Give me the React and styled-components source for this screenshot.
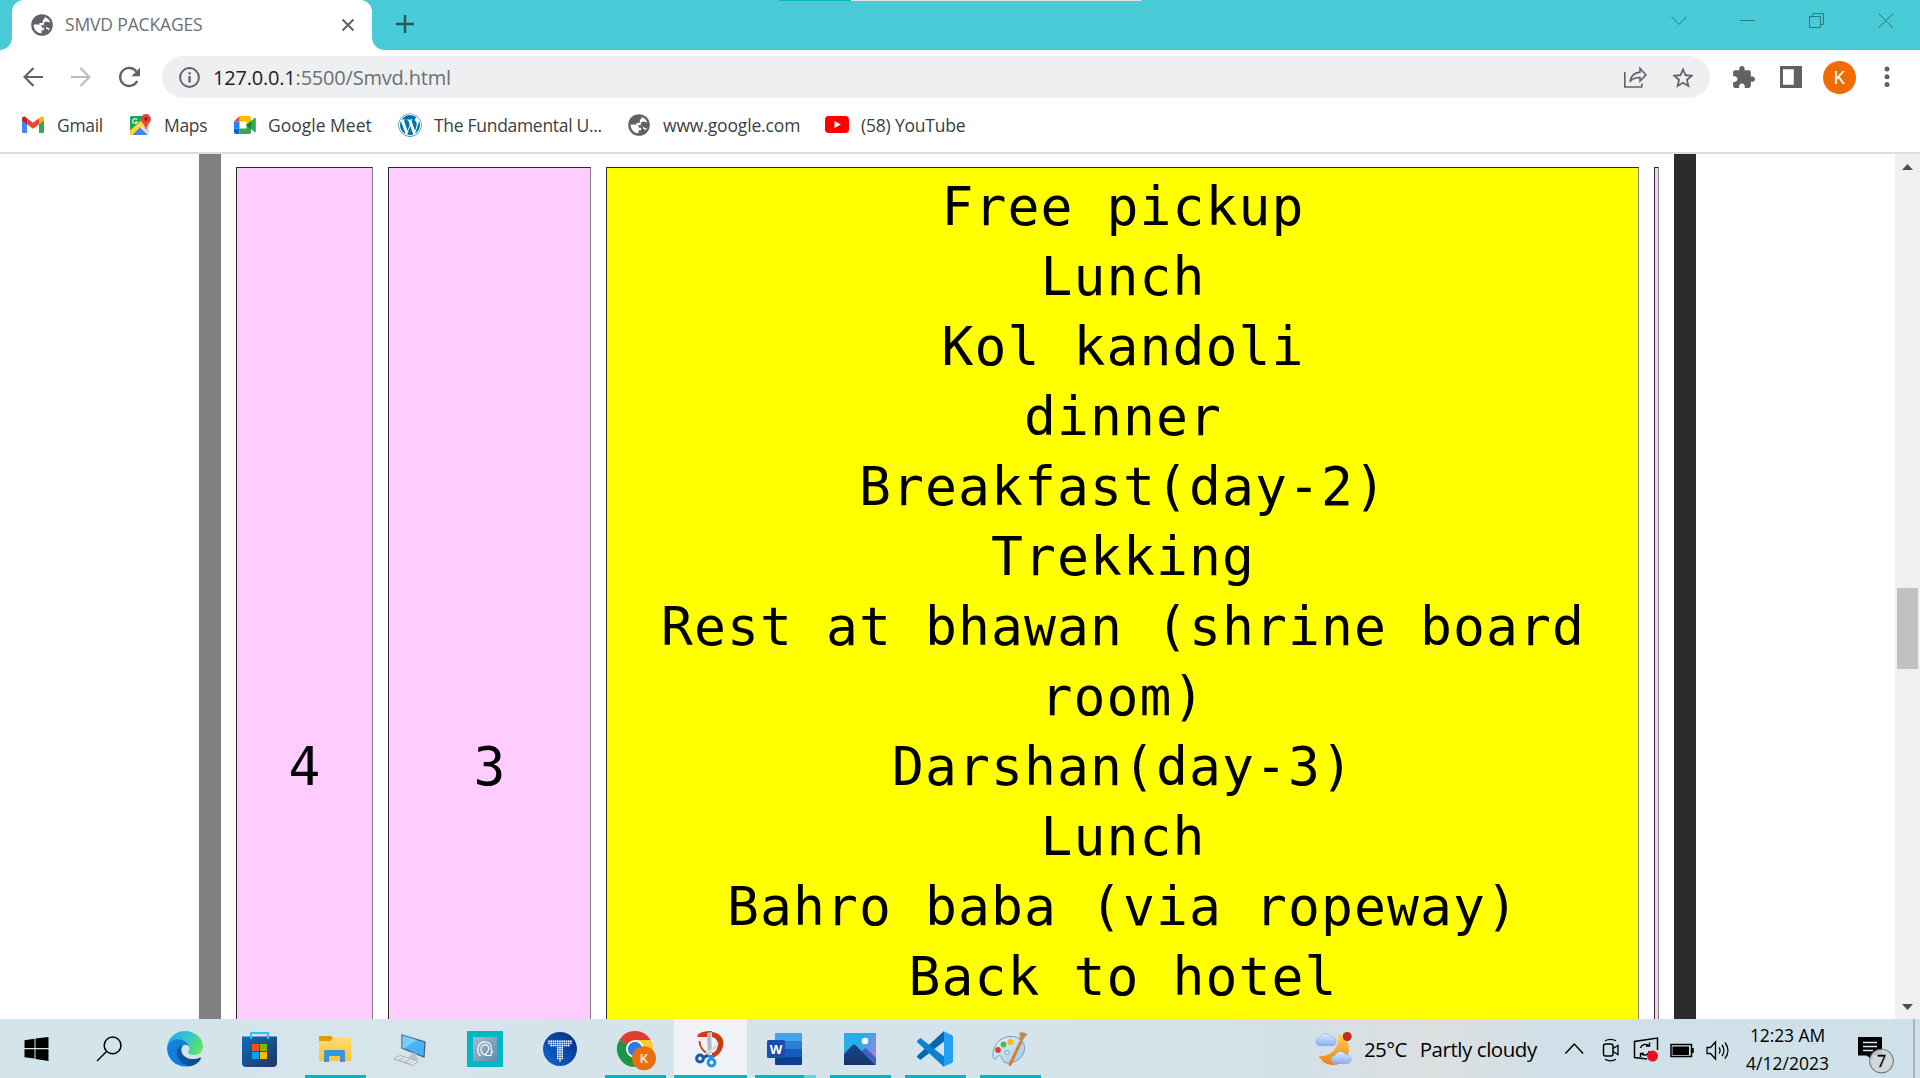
import React from "react";
import styled, { createGlobalStyle, css } from "styled-components";
import { MdExtension, MdStarBorder } from "react-icons/md";
import { FaWordpress } from "react-icons/fa";

const GlobalStyle = createGlobalStyle`
  * { box-sizing: border-box; }
  html, body { margin: 0; padding: 0; overflow: hidden; background: #fff; }
  svg { display: block; flex: none; overflow: visible; }
`;

const Screen = styled.div`
  width: 1920px;
  height: 1078px;
  display: flex;
  flex-direction: column;
  overflow: hidden;
  background: #fff;
  font-family: "Open Sans", "Noto Sans", sans-serif;
`;

/* ---------- browser chrome ---------- */

const TabStrip = styled.header`
  position: relative;
  flex: none;
  height: 50px;
  display: flex;
  padding-left: 12px;
  background: #48cbd6;
`;

const Progress = styled.div`
  position: absolute;
  top: 0;
  left: 779px;
  width: 362px;
  height: 1px;
  background: linear-gradient(to right, #00b7c3 72px, #e1e1e1 72px);
`;

const Tab = styled.div`
  position: relative;
  width: 360px;
  height: 50px;
  display: flex;
  align-items: center;
  padding: 0 18px 0 19px;
  background: #fff;
  border-radius: 12px 12px 0 0;

  &::before, &::after {
    content: "";
    position: absolute;
    bottom: 0;
    width: 12px;
    height: 12px;
  }
  &::before {
    left: -12px;
    background: radial-gradient(circle at 0 0, transparent 11.5px, #fff 12px);
  }
  &::after {
    right: -12px;
    background: radial-gradient(circle at 100% 0, transparent 11.5px, #fff 12px);
  }
`;

const Label = styled.span`
  font-size: ${(p) => p.$size || 17.5}px;
  letter-spacing: ${(p) => p.$track || 0}px;
  color: ${(p) => p.$color || "#3c4043"};
  margin-left: ${(p) => p.$indent || 0}px;
  line-height: 24px;
  white-space: pre;
`;

const TabTitle = styled(Label)`
  flex: 1;
  margin: 0 0 2px 12px;
`;

const NewTab = styled.div`
  padding: 15px 0 0 24px;
`;

const WindowButtons = styled.div`
  margin-left: auto;
  display: flex;
  gap: 53px;
  padding: 13px 26px 0 0;
`;

const Toolbar = styled.div`
  flex: none;
  height: 54px;
  display: flex;
  align-items: center;
  padding: 0 0 0 23px;
`;

const NavButtons = styled.div`
  width: 139px;
  display: flex;
  gap: 28px;
`;

const Omnibox = styled.div`
  width: 1548px;
  height: 42px;
  display: flex;
  align-items: center;
  padding: 1px 14px 0 17px;
  border-radius: 21px;
  background: #eeeff1;
`;

const Url = styled(Label)`
  flex: 1;
  margin-left: 13px;
  b { font-weight: 400; color: #202124; }
`;

const OmniActions = styled.div`
  display: flex;
  align-items: center;
  gap: 23px;
`;

const ToolbarActions = styled.div`
  display: flex;
  align-items: center;
  padding-left: 21px;
`;

const PanelButton = styled.div`
  margin-left: 24px;
`;

const Avatar = styled.div`
  width: 33px;
  height: 33px;
  margin: 0 28px 0 21px;
  border-radius: 50%;
  background: #ef6c00;
  color: #fff;
  display: grid;
  place-items: center;
  font: 18px Roboto, sans-serif;
`;

const Bookmarks = styled.nav`
  flex: none;
  height: 50px;
  display: flex;
  align-items: flex-start;
  padding: 8px 0 0 22px;
  border-bottom: 2px solid #dcdcdc;
`;

const Bookmark = styled.div`
  width: ${(p) => p.$width}px;
  height: 25px;
  display: flex;
  align-items: center;
  gap: ${(p) => p.$gap || 12}px;
`;

/* ---------- page ---------- */

const Viewport = styled.main`
  flex: 1;
  min-height: 0;
  display: flex;
  overflow: hidden;
`;

const Page = styled.div`
  flex: 1;
  display: flex;
  padding-left: 199px;
`;

const Table = styled.div`
  display: flex;
  align-items: flex-start;
  gap: 15px;
  width: 1497px;
  height: 1300px;
  padding: 13px 15px 0;
  border-left: 22px solid #808080;
  border-right: 22px solid #2c2c2c;
`;

const Cell = styled.div`
  flex: none;
  width: ${(p) => p.$width}px;
  height: 1200px;
  display: flex;
  flex-direction: column;
  justify-content: center;
  align-items: center;
  padding: 4px 0 4px ${(p) => (p.$width > 10 ? 1 : 0)}px;
  background: #ffccff;
  border: 1px solid;
  border-color: #2c2c2c #808080 #808080 #2c2c2c;
  font: 53px/70px "DejaVu Sans Mono", monospace;
  letter-spacing: 1.09px;
  color: #000;
  ${(p) => p.$plan && css`
    justify-content: flex-start;
    background: #ffff00;
  `}
`;

const Line = styled.div`
  white-space: pre;
`;

const Scrollbar = styled.div`
  width: 25px;
  height: 100%;
  display: flex;
  flex-direction: column;
  align-items: center;
  padding: 10px 0 9px;
  background: #f0f0f0;
`;

const Thumb = styled.div`
  width: 21px;
  height: 81px;
  margin: 418px 0 auto;
  background: #c1c1c1;
`;

/* ---------- taskbar ---------- */

const Taskbar = styled.footer`
  flex: none;
  height: 59px;
  display: flex;
  background: linear-gradient(to right, #d3e4ea 0, #d6e4ec 300px, #d4e4ea 1050px, #d3e0e8 1290px, #dcdfe0 1430px, #cfe0e9 1560px, #cfe1e8 1920px);
`;

const Slot = styled.div`
  width: ${(p) => p.$width || 75}px;
  height: 59px;
  display: flex;
  flex-direction: column;
  align-items: center;
  padding-top: 12px;
  svg { margin-right: 1px; }
`;

const SlotFill = styled(Slot)`
  width: 73px;
  margin: 0 1px;
  background: #eff3f7;
`;

const Running = styled.div`
  width: ${(p) => p.$width || 61}px;
  height: 3px;
  margin-top: 8px;
  background: ${(p) => (p.$stacked ? "linear-gradient(to right, #00b7c3 49px, #62d2d9 49px)" : "#00b7c3")};
`;

const Tray = styled.div`
  margin-left: auto;
  width: 604px;
  display: flex;
  align-items: center;
`;

const Weather = styled.div`
  width: 249px;
  display: flex;
  align-items: center;
`;

const TrayIcons = styled.div`
  width: 165px;
  display: flex;
  align-items: center;
`;

const Clock = styled.div`
  width: 115px;
  display: flex;
  flex-direction: column;
  align-items: center;
  gap: 4px;
`;

const Notice = styled.div`
  padding: 13px 0 0 13px;
`;

const ShowDesktop = styled.div`
  width: 7px;
  height: 59px;
  margin-left: auto;
  border-left: 2px solid #a9b6bd;
`;

const lines = [
  "Free pickup", "Lunch", "Kol kandoli", "dinner", "Breakfast(day-2)", "Trekking",
  "Rest at bhawan (shrine board", "room)", "Darshan(day-3)", "Lunch",
  "Bahro baba (via ropeway)", "Back to hotel",
];

const g = "#5f6368";

const GlobeIcon = () => (
  <svg width="22" height="22" viewBox="0 0 22 22">
    <circle cx="11" cy="11" r="10.800" fill={g} />
    <path d="M2.700 10.500h4.600c2.200 0 3.700 1.300 3.700 3.300h2v2.400h-2.400v3.100c-4.600 0-8-3.800-7.900-8.800z" fill="#fff" />
    <path d="M13.600 3.100c3.600 1.100 5.900 4.200 5.900 8 0 2.200-.8 4.100-2 5.500-.4-.9-.9-1.500-2.300-1.500v-2.500c0-.8-.5-1.300-1.400-1.300H8.500V8.900h2.300c.7 0 1.100-.4 1.100-1.100V5.500h.6c.7 0 1.100-.6 1.100-2.400z" fill="#fff" />
    <path d="M15.500 7.500l4.600 1.300.4 4.500-3.200 1.200-2.300-2.200-2.500-1.500.8-2.500z" fill={g} />
  </svg>
);

const BackIcon = ({ color = g, flip }) => (
  <svg width="20" height="20" viewBox="0 0 20 20" fill="none" stroke={color} strokeWidth="2.2" transform={flip ? "scale(-1 1)" : undefined}>
    <path d="M20 10H1.8M10.5 1L1.6 10l8.9 9" />
  </svg>
);

const ReloadIcon = () => (
  <svg width="21" height="21" viewBox="0 0 21 21">
    <path d="M17.3 4.5A9 9 0 1 0 18.2 14" fill="none" stroke={g} strokeWidth="2.3" />
    <path d="M21 .8v8.4h-8.6z" fill={g} />
  </svg>
);

const InfoIcon = () => (
  <svg width="21" height="21" viewBox="0 0 21 21">
    <circle cx="10.5" cy="10.5" r="9.4" fill="none" stroke={g} strokeWidth="2" />
    <path d="M9.4 5.2h2.3v2.2H9.4zM9.4 9h2.3v6.6H9.4z" fill={g} />
  </svg>
);

const ShareIcon = () => (
  <svg width="23" height="21" viewBox="0 0 23 21" fill="none" stroke={g} strokeWidth="1.6">
    <path d="M.8 5v15h17v-3.6" />
    <path d="M16 1.4L22 7.9 16 14v-3.5c-5 0-8.2 1.400-10 4.200.6-5.300 4.400-9 10-9.600z" />
  </svg>
);

const PanelIcon = () => (
  <svg width="22" height="22" viewBox="0 0 22 22">
    <path d="M0 0h22v22H0zM3 3.2v15.6h10.8V3.2z" fill={g} fillRule="evenodd" />
  </svg>
);

const DotsIcon = () => (
  <svg width="6" height="22" viewBox="0 0 6 22" fill={g}>
    <circle cx="3" cy="3" r="2.5" /><circle cx="3" cy="10.7" r="2.5" /><circle cx="3" cy="18.4" r="2.5" />
  </svg>
);

const GmailIcon = () => (
  <svg width="22" height="17" viewBox="0 0 22 17">
    <path d="M0 3v12.5A1.5 1.5 0 0 0 1.5 17H5V6.500z" fill="#4285f4" />
    <path d="M22 3v12.5a1.500 1.500 0 0 1-1.500 1.500H17V6.500z" fill="#34a853" />
    <path d="M5 8.200V2.200L11 6.800l6-4.600v6L11 12.700z" fill="#ea4335" />
    <path d="M0 2.800v1.700L5 8.200V2.200L3.500 1C2 0 0 .9 0 2.800z" fill="#c5221f" />
    <path d="M22 2.800v1.700l-5 3.700V2.200L18.500 1C20 0 22 .9 22 2.800z" fill="#fbbc04" />
  </svg>
);

const MapsIcon = () => (
  <svg width="23" height="22" viewBox="0 0 23 22">
    <rect x="1" y="2" width="19" height="19" rx="1.800" fill="#e8eaed" />
    <path d="M2.500 2H15l3 6L1 21V3.500A1.500 1.500 0 0 1 2.500 2z" fill="#23a455" />
    <path d="M1 16.500L15 4l4 4L4 21H1z" fill="#fdd835" />
    <path d="M3.500 21l7.500-7.500 8 7.500z" fill="#4285f4" />
    <path d="M12.800 12.500l7.200 7V9l-3-1z" fill="#cfd2d6" />
    <path d="M8 5.700A2.400 2.400 0 1 0 8.300 8H6" fill="none" stroke="#fff" strokeWidth="1.100" />
    <path d="M16.900 0a5 5 0 0 0-5 5c0 3.700 4 4.800 4.700 10.200h.7C18 9.800 22 8.700 22 5a5 5 0 0 0-5.100-5z" fill="#e84435" />
    <circle cx="17" cy="5" r="1.800" fill="#8a1a13" />
  </svg>
);

const MeetIcon = () => (
  <svg width="22" height="18" viewBox="0 0 22 18">
    <path d="M0 5.500L5.500 0v5.500z" fill="#ea4335" />
    <path d="M5.500 0h9.800A1.700 1.700 0 0 1 17 1.700V7l-4.500 3V5.500h-7z" fill="#fbbc04" />
    <path d="M0 5.500h5.500v7H0z" fill="#2684fc" />
    <path d="M0 12.500h5.500V18H1.700A1.700 1.700 0 0 1 0 16.300z" fill="#0066da" />
    <path d="M5.500 12.500h7V8L17 11v5.300a1.700 1.700 0 0 1-1.700 1.700H5.500z" fill="#34a853" />
    <path d="M12.500 9l8-7c.6-.5 1.300-.2 1.300.5v13c0 .7-.7 1-1.300.5z" fill="#34a853" />
    <path d="M12.500 9L17 5v8z" fill="#188038" />
  </svg>
);

const YoutubeIcon = () => (
  <svg width="24" height="17" viewBox="0 0 24 17">
    <rect width="24" height="17" rx="3.800" fill="#f00" />
    <path d="M9.500 5v7l6.300-3.500z" fill="#fff" />
  </svg>
);

const StartIcon = () => (
  <svg width="36" height="36" viewBox="0 0 36 36">
    <path d="M6.500 9.300l10-1.500V17h-10zM17.500 7.600l13-1.600v11h-13zM6.500 18.200h10v9.400l-10-1.300zM17.500 18.200h13V30l-13-1.900z" />
  </svg>
);

const SearchIcon = () => (
  <svg width="36" height="36" viewBox="0 0 36 36" fill="none" stroke="#000" strokeWidth="1.500">
    <circle cx="20.600" cy="14.400" r="8.400" /><path d="M14.500 20.500L5 30" />
  </svg>
);

const EdgeIcon = () => (
  <svg width="36" height="36" viewBox="0 0 36 36">
    <defs>
      <linearGradient id="edgeTop" x1="0" y1=".3" x2="1" y2=".6"><stop stopColor="#25a9ea" /><stop offset=".5" stopColor="#2fc7cf" /><stop offset="1" stopColor="#62e45a" /></linearGradient>
      <linearGradient id="edgeLeft" x1="0" y1="0" x2=".5" y2="1"><stop stopColor="#1386d8" /><stop offset="1" stopColor="#0a7be0" /></linearGradient>
      <linearGradient id="edgeLow" x1="0" y1="0" x2="1" y2="1"><stop stopColor="#0f5cb1" /><stop offset="1" stopColor="#114a8b" /></linearGradient>
    </defs>
    <path d="M0 16C1.500 6 9 0 18 0c10 0 18 7 18 15.500 0 5-3.800 8.500-8.700 8.500-4.300 0-6.300-1.500-6.300-2.600 0-1 1.300-1.400 1.300-4 0-5-4.600-8.600-10.300-8.600C6 8.800 1.500 12 0 16z" fill="url(#edgeTop)" />
    <path d="M0 17c.5-5.500 5.500-8.700 11-8.700 6 0 10.500 3.500 11.200 7.500-2-2.200-4.500-2.400-6-1.400-7 4.600-2.200 17.600 9.800 20C12 39 0 29.500 0 17z" fill="url(#edgeLeft)" />
    <path d="M16.200 14c-7.400 1-8.200 9-4.400 14 4.200 6 10 7.600 13.600 6.700 4-1.200 7-4 8.500-7 .4-.9-.3-1.400-1.200-1-7.200 3.300-18 .8-18.300-7.700 0-2 .8-3.800 1.800-5z" fill="url(#edgeLow)" />
  </svg>
);

const StoreIcon = () => (
  <svg width="36" height="36" viewBox="0 0 36 36">
    <defs><linearGradient id="store" x1="0" y1="0" x2="1" y2="1"><stop stopColor="#0d6cbe" /><stop offset="1" stopColor="#22355f" /></linearGradient></defs>
    <path d="M0 5.500h35V32a4 4 0 0 1-4 4H4a4 4 0 0 1-4-4z" fill="url(#store)" />
    <path d="M9 8V2h17v6" fill="none" stroke="#31c4f3" strokeWidth="2" />
    <path d="M10 13h7v7h-7z" fill="#f25022" /><path d="M18 13h7v7h-7z" fill="#7fba00" />
    <path d="M10 21h7v7h-7z" fill="#00a4ef" /><path d="M18 21h7v7h-7z" fill="#ffb900" />
  </svg>
);

const FolderIcon = () => (
  <svg width="36" height="36" viewBox="0 0 36 36">
    <defs><linearGradient id="folder" x1="0" y1="0" x2="0" y2="1"><stop stopColor="#ffdb6b" /><stop offset="1" stopColor="#f9c440" /></linearGradient></defs>
    <path d="M2 6a1 1 0 0 1 1-1h11l2 2v4H2z" fill="#dd9c07" />
    <path d="M2 10h11l3-3h17a1 1 0 0 1 1 1v22H3a1 1 0 0 1-1-1z" fill="url(#folder)" />
    <path d="M7 31V20.500a1.500 1.500 0 0 1 1.500-1.500h18a1.500 1.500 0 0 1 1.500 1.500V31h-5v-6H12v6z" fill="#3a94dc" />
  </svg>
);

const PcIcon = () => (
  <svg width="36" height="36" viewBox="0 0 36 36">
    <path d="M10 4l23 7-1 15-22-9z" fill="#49b3fa" stroke="#4b6478" strokeWidth="1.300" />
    <path d="M10.500 4.500L25 9 12 17.600l-1.500-.7z" fill="#7fcbfc" />
    <path d="M19 21l6 2-1 3 4 2.500-5 .5-8-3 4-1z" fill="#b9c4cc" />
    <path d="M2 28l6-3.500 18 6-5 4z" fill="#f3f6f8" stroke="#9aa5ad" strokeWidth=".9" />
    <path d="M5 28l15 5M7 26.500l16 5.500M7 30l5-4M13 32l5-4" stroke="#a4aeb5" strokeWidth=".7" />
  </svg>
);

const HeadIcon = () => (
  <svg width="36" height="36" viewBox="0 0 36 36">
    <defs><linearGradient id="head" x1="0" y1="0" x2="1" y2="1"><stop stopColor="#a5bdd2" /><stop offset="1" stopColor="#6289ae" /></linearGradient></defs>
    <path d="M0 0h36v36H0z" fill="#00b7c3" /><path d="M6 6h24v24H6z" fill="url(#head)" />
    <g fill="none" stroke="#fff" strokeWidth="1.100">
      <path d="M13.500 25c-2.500-2-3-5-2.500-8 1-5 4.500-6.500 8-6 4 .5 5.500 4 5.200 7.500l1.300 3-1.500.5v2.500h-5v-2" />
      <path d="M15.500 22.500c-2-2-2.500-7 1-8.500 4-1.500 6 2 5 5-.8 2-2.500 2.500-2.500 4-1 .8-2.500.5-3.500-.5z" />
    </g>
  </svg>
);

const dots = [];
for (let y = 0; y < 10; y++) {
  for (let x = 0; x < 11; x++) {
    if (y < 3 ? !(y === 2 && (x < 1 || x > 9)) : x > 3 && x < 7 && !(y === 9 && x !== 5)) dots.push([x, y]);
  }
}
const DottedIcon = () => (
  <svg width="36" height="36" viewBox="0 0 36 36">
    <defs><linearGradient id="tee" x1="1" y1="0" x2="0" y2="1"><stop stopColor="#062c7b" /><stop offset="1" stopColor="#1268d6" /></linearGradient></defs>
    <circle cx="18" cy="18" r="17" fill="url(#tee)" />
    {dots.map(([x, y]) => <circle key={x + "-" + y} cx={7 + x * 2.2} cy={10.2 + y * 2.15} r=".95" fill="#f4f8ff" />)}
  </svg>
);

const ChromeIcon = () => (
  <svg width="36" height="36" viewBox="0 0 36 36">
    <path d="M18 18L2.400 9A18 18 0 0 1 33.600 9z" fill="#e33b2e" />
    <path d="M18 9h15.600A18 18 0 0 1 18 36l8-13z" fill="#fcc934" />
    <path d="M2.400 9A18 18 0 0 0 18 36l7.800-13.500L18 18z" fill="#1e9545" />
    <circle cx="18" cy="18" r="9" fill="#fff" /><circle cx="18" cy="18" r="7.200" fill="#2b7de9" />
    <circle cx="27" cy="27.200" r="12" fill="#e86f10" />
    <text x="27" y="32" textAnchor="middle" fontFamily="Roboto, sans-serif" fontSize="13" fontWeight="700" fill="#f7d9bd">K</text>
  </svg>
);

const SnipIcon = () => (
  <svg width="36" height="36" viewBox="0 0 36 36">
    <path d="M5 5c2-4 8-5 15-5l-2 6H6z" fill="#d13a12" />
    <path d="M20 1c10 1 14 10 10 17-2 5-6 8-10 9v-5c4-1 5-4 6-8 0-4-2-7-6-8z" fill="#ce3a11" />
    <path d="M7.500 10c0 6 4 11 9 13" fill="none" stroke="#ce3a11" strokeWidth="1.800" />
    <path d="M15 2l4-1 1 20-4 4z" fill="#b4b7bb" /><path d="M27 12l-2 4-10 9-2-3z" fill="#d8dadd" />
    <circle cx="8" cy="27.500" r="3.400" fill="none" stroke="#115fab" strokeWidth="3" /><path d="M10 25l6-2 1 3-6 2z" fill="#115fab" />
    <circle cx="19.500" cy="31.500" r="3.400" fill="none" stroke="#2394e2" strokeWidth="3" /><path d="M17 24h4v5h-4z" fill="#2394e2" />
  </svg>
);

const WordIcon = () => (
  <svg width="36" height="36" viewBox="0 0 36 36">
    <path d="M9 2h25a1 1 0 0 1 1 1v7H8V3a1 1 0 0 1 1-1z" fill="#41a5ee" /><path d="M8 10h27v8H8z" fill="#2b7cd3" />
    <path d="M8 18h27v8H8z" fill="#185abd" /><path d="M8 26h27v7a1 1 0 0 1-1 1H9a1 1 0 0 1-1-1z" fill="#103f91" />
    <rect y="9" width="18" height="18" rx="1.500" fill="#184fae" />
    <text x="9" y="22.500" textAnchor="middle" fontFamily="Open Sans, sans-serif" fontSize="13" fontWeight="700" fill="#fff">W</text>
  </svg>
);

const PhotosIcon = () => (
  <svg width="36" height="36" viewBox="0 0 36 36">
    <defs>
      <linearGradient id="sky" x1="0" y1="0" x2="1" y2=".6"><stop offset=".5" stopColor="#27ade9" /><stop offset="1" stopColor="#9d84d9" /></linearGradient>
      <linearGradient id="hill" x1="0" y1="0" x2="0" y2="1"><stop stopColor="#164a92" /><stop offset="1" stopColor="#173467" /></linearGradient>
    </defs>
    <path d="M2 2h32v32H2z" fill="url(#sky)" /><path d="M18 22l4-4q1.500-1.500 3 0l9 9v7H18z" fill="#3e62bd" />
    <path d="M2 23l8.500-9q1.500-1 3 0L33 34H2z" fill="url(#hill)" /><circle cx="23" cy="10" r="3.300" fill="#fff" />
  </svg>
);

const CodeIcon = () => (
  <svg width="36" height="36" viewBox="0 0 36 36">
    <path d="M27 0L.5 24.500c-.6.6-.6 1.400 0 2l2 1.800c.5.500 1.300.5 1.900 0L27 10.500z" fill="#0069b0" />
    <path d="M27 36L.5 11.500c-.6-.6-.6-1.400 0-2l2-1.800c.5-.5 1.300-.5 1.900 0L27 25.500z" fill="#0a82cf" />
    <path d="M26 0l8.800 4a2 2 0 0 1 1.200 1.800v24.400a2 2 0 0 1-1.200 1.800L26 36l1-1.500v-33z" fill="#23a0f2" />
  </svg>
);

const PaintIcon = () => (
  <svg width="36" height="36" viewBox="0 0 36 36">
    <defs><linearGradient id="palette" x1="0" y1="0" x2="1" y2="1"><stop stopColor="#e8f5fc" /><stop offset="1" stopColor="#9fc8e4" /></linearGradient></defs>
    <path d="M1 25C0 15 8 6 18 5.500c9-.3 15 5 14.500 12.500C32 26 24 32 16 32c-5 0-5-2-6-5-1-2.500-3-3-4.500-1.500C4.500 27 4.500 28 3 28c-1.300 0-2-1.500-2-3z" fill="url(#palette)" stroke="#5f97be" strokeWidth=".9" />
    <circle cx="6" cy="19" r="2.900" fill="#e63b31" /><circle cx="11.500" cy="13.500" r="2.900" fill="#57b947" /><circle cx="18.500" cy="11" r="3.100" fill="#fbb61c" />
    <circle cx="15" cy="21.500" r="2.100" fill="#d6e5ee" stroke="#6c9dbe" strokeWidth=".8" />
    <path d="M28 10l2 1-11 23-2 1 .5-3z" fill="#e5801f" stroke="#b25d12" strokeWidth=".5" />
    <path d="M27 2c2-1.500 6-1 8.500 1.500-3 1.500-3 4.500-5.500 7l-3-1.500c1-3 1.500-5 0-7z" fill="#b98a5d" />
  </svg>
);

const cloud = "M4 13a4 4 0 0 1 0-8C5 1 12-1 14.500 4c4 0 6 2.500 5.500 5.500-.5 2.500-2 3.500-4 3.500z";
const WeatherIcon = () => (
  <svg width="36" height="34" viewBox="0 0 36 34">
    <defs>
      <linearGradient id="moon" x1="0" y1="0" x2="0" y2="1"><stop stopColor="#ffd34f" /><stop offset="1" stopColor="#f08216" /></linearGradient>
      <linearGradient id="cloud" x1="0" y1="0" x2="0" y2="1"><stop stopColor="#e2edff" /><stop offset="1" stopColor="#88aef0" /></linearGradient>
    </defs>
    <path d="M22 2c7 2 11 8 11 15 0 9-7 16-16 16-7 0-12-4-14-9 11 1 21-7 19-22z" fill="url(#moon)" />
    <path d={cloud} fill="url(#cloud)" stroke="#7ea6e8" strokeWidth=".6" transform="translate(0 .7)" />
    <path d={cloud} fill="url(#cloud)" stroke="#7ea6e8" strokeWidth=".6" transform="translate(15 18.500)" />
    <circle cx="31.200" cy="4.500" r="4.500" fill="#c42b1c" />
  </svg>
);

const TrayGlyphs = () => (
  <svg width="165" height="30" viewBox="0 0 165 30" fill="none" stroke="#000" strokeWidth="1.500">
    <path d="M.5 19.500l8.800-9.500 8.800 9.500" />
    <rect x="38.500" y="10" width="9.500" height="12" rx="2" /><path d="M48 14.500l5-3v9l-5-3M40 6.800q5.500-3 11 0M40 25.300q5.500 3 11 0" strokeWidth="1.300" />
    <path d="M82 25l-12.500-1.500V7.500L92.500 4v12" />
    <path d="M75.500 14a5 5 0 0 1 8.500-2M84.500 8.500V12H81M84.500 17a5 5 0 0 1-8.500 2.500M75.500 23v-3.500H79" strokeWidth="1.400" />
    <circle cx="87.500" cy="22" r="5.500" fill="#e81123" stroke="none" />
    <path d="M106 10.500h20.500v12H106zM128 14v5" /><path d="M107.500 12.500H124v8.500h-16.500z" fill="#000" stroke="none" />
    <path d="M142 13.500h3.500l5-5.500v17l-5-5.500H142zM154 13.500q2.200 3 0 6M157 11q4 5.500 0 11M160 8.500q6 8 0 16" strokeWidth="1.300" />
  </svg>
);

const NoticeIcon = () => (
  <svg width="37" height="37" viewBox="0 0 37 37">
    <path d="M0 0h24v18.500H15v4.500L8.500 18.500H0z" />
    <path d="M5 5.500h14M5 9.500h14M5 13.500h10" stroke="#dce8ee" strokeWidth="1.300" />
    <circle cx="23.500" cy="24" r="11.800" fill="#d3d6d9" fillOpacity=".92" stroke="#6f777c" strokeWidth="1.100" />
    <text x="23.500" y="29.800" textAnchor="middle" fontFamily="Open Sans, sans-serif" fontSize="16" fill="#000" stroke="#000" strokeWidth=".3">7</text>
  </svg>
);

export default function App() {
  return (
    <Screen>
      <GlobalStyle />
      <TabStrip>
        <Progress />
        <Tab>
          <GlobeIcon />
          <TabTitle $track={-0.15} $color="#6b6f73">SMVD PACKAGES</TabTitle>
          <svg width="12" height="12" viewBox="0 0 12 12" stroke={g} strokeWidth="2"><path d="M.5.5l11 11M11.500.5l-11 11" /></svg>
        </Tab>
        <NewTab>
          <svg width="18" height="18" viewBox="0 0 18 18" stroke="#2b5559" strokeWidth="2.400"><path d="M9 0v18M0 9h18" /></svg>
        </NewTab>
        <WindowButtons>
          <svg width="16" height="16" viewBox="0 0 16 16" fill="none" stroke="#31777d"><path d="M.5 3.500L8 11.500l7.500-8" /></svg>
          <svg width="16" height="16" viewBox="0 0 16 16" fill="none" stroke="#31777d"><path d="M0 7.500h15" /></svg>
          <svg width="16" height="16" viewBox="0 0 16 16" fill="none" stroke="#31777d"><path d="M.5 3.500h11v11H.5zM3.500 3.500v-3h11v11h-3" /></svg>
          <svg width="16" height="16" viewBox="0 0 16 16" fill="none" stroke="#31777d"><path d="M.5.5l14.500 14.500M15 .5L.5 15" /></svg>
        </WindowButtons>
      </TabStrip>

      <Toolbar>
        <NavButtons><BackIcon /><BackIcon flip color="#babcbe" /><ReloadIcon /></NavButtons>
        <Omnibox>
          <InfoIcon />
          <Url $size={20} $track={-0.2} $color="#6b6f73"><b>127.0.0.1</b>:5500/Smvd.html</Url>
          <OmniActions><ShareIcon /><MdStarBorder size={26} color={g} /></OmniActions>
        </Omnibox>
        <ToolbarActions>
          <MdExtension size={25} color={g} />
          <PanelButton><PanelIcon /></PanelButton>
          <Avatar>K</Avatar>
          <DotsIcon />
        </ToolbarActions>
      </Toolbar>

      <Bookmarks>
        <Bookmark $width={107} $gap={13}><GmailIcon /><Label $track={-0.3}>Gmail</Label></Bookmark>
        <Bookmark $width={105}><MapsIcon /><Label $track={-0.3}>Maps</Label></Bookmark>
        <Bookmark $width={164}><MeetIcon /><Label $track={0}>Google Meet</Label></Bookmark>
        <Bookmark $width={230}><FaWordpress size={24} color="#0073aa" /><Label $track={-0.3}>The Fundamental U...</Label></Bookmark>
        <Bookmark $width={197} $gap={13}><GlobeIcon /><Label $track={-0.15}>www.google.com</Label></Bookmark>
        <Bookmark $width={200}><YoutubeIcon /><Label $track={-0.2}>(58) YouTube</Label></Bookmark>
      </Bookmarks>

      <Viewport>
        <Page>
          <Table>
            <Cell $width={137}><Line>4</Line></Cell>
            <Cell $width={203}><Line>3</Line></Cell>
            <Cell $width={1033} $plan>{lines.map((t, i) => <Line key={i}>{t}</Line>)}</Cell>
            <Cell $width={5} />
          </Table>
        </Page>
        <Scrollbar>
          <svg width="11" height="6" viewBox="0 0 11 6"><path d="M0 6l5.500-6L11 6z" fill="#505050" /></svg>
          <Thumb />
          <svg width="11" height="6" viewBox="0 0 11 6"><path d="M0 0l5.500 6L11 0z" fill="#505050" /></svg>
        </Scrollbar>
      </Viewport>

      <Taskbar>
        <Slot $width={72}><StartIcon /></Slot>
        <Slot $width={76}><SearchIcon /></Slot>
        <Slot><EdgeIcon /></Slot>
        <Slot><StoreIcon /></Slot>
        <Slot><FolderIcon /><Running /></Slot>
        <Slot><PcIcon /></Slot>
        <Slot><HeadIcon /></Slot>
        <Slot><DottedIcon /></Slot>
        <Slot><ChromeIcon /><Running /></Slot>
        <SlotFill><SnipIcon /><Running $width={73} /></SlotFill>
        <Slot><WordIcon /><Running $stacked /></Slot>
        <Slot><PhotosIcon /><Running /></Slot>
        <Slot><CodeIcon /><Running /></Slot>
        <Slot><PaintIcon /><Running /></Slot>
        <Tray>
          <Weather>
            <WeatherIcon />
            <Label $size={20.5} $track={-0.6} $indent={12} $color="#000">25°C</Label>
            <Label $size={20.5} $track={-0.45} $indent={13} $color="#000">Partly cloudy</Label>
          </Weather>
          <TrayIcons><TrayGlyphs /></TrayIcons>
          <Clock>
            <Label $track={-0.1} $color="#000">12:23 AM</Label>
            <Label $track={0} $color="#000">4/12/2023</Label>
          </Clock>
          <Notice><NoticeIcon /></Notice>
          <ShowDesktop />
        </Tray>
      </Taskbar>
    </Screen>
  );
}
